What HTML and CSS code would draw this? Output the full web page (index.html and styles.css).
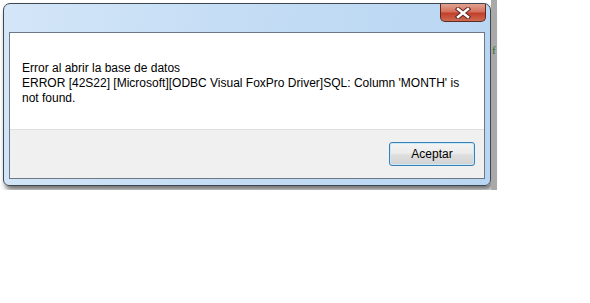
FILE: index.html
```html
<!DOCTYPE html>
<html lang="es">
<head>
    <meta charset="UTF-8">
    <title>Error</title>
    <link rel="stylesheet" href="styles.css">
</head>
<body>
    <div class="desktop">
        <div class="window">
            <div class="titlebar">
                <div class="close-btn">
                    <svg width="16" height="12" viewBox="0 0 16 12">
                        <path d="M3 2 L13 10 M13 2 L3 10" stroke="#5a2a26" stroke-width="4.4" stroke-linecap="square"/>
                        <path d="M3 2 L13 10 M13 2 L3 10" stroke="#ffffff" stroke-width="2.4" stroke-linecap="square"/>
                    </svg>
                </div>
            </div>
            <div class="client">
                <div class="message">
                    Error al abrir la base de datos<br>
                    ERROR [42S22] [Microsoft][ODBC Visual FoxPro Driver]SQL: Column 'MONTH' is not found.
                </div>
                <div class="footer">
                    <button class="ok-btn">Aceptar</button>
                </div>
            </div>
        </div>
        <div class="side-strip"><span class="green-f">f</span></div>
    </div>
</body>
</html>
```

FILE: styles.css
```css
body {
    margin: 0;
    background: #fff;
    font-family: "Liberation Sans", Arial, sans-serif;
}
.desktop {
    display: flex;
    align-items: flex-start;
    padding: 3px 0 0 3px;
}
.window {
    border: 1px solid #3e4750;
    border-radius: 7px 7px 6px 6px;
    background: linear-gradient(100deg, #d4e6f8 0%, #c6def5 40%, #b8d5f2 100%);
    padding: 0 5px 6px 5px;
    box-sizing: border-box;
    width: 488px;
    height: 183px;
    display: flex;
    flex-direction: column;
    box-shadow: 2px 4px 5px rgba(0, 0, 0, 0.55);
}
.titlebar {
    height: 28px;
    display: flex;
    justify-content: flex-end;
    align-items: flex-start;
}
.close-btn {
    width: 46px;
    height: 18px;
    border: 1px solid #5d2a22;
    border-top: none;
    border-radius: 0 0 5px 5px;
    background: linear-gradient(#e3a18f 0%, #d4715c 45%, #c2402b 55%, #cf6a52 100%);
    display: flex;
    align-items: center;
    justify-content: center;
    box-sizing: border-box;
    margin-right: -1px;
}
.client {
    flex: 1;
    border: 1px solid #6c7885;
    background: #fff;
    display: flex;
    flex-direction: column;
}
.message {
    flex: 1;
    padding: 28px 8px 0 12px;
    font-size: 12px;
    line-height: 15px;
    color: #000;
}
.footer {
    height: 49px;
    background: #f0f0f0;
    border-top: 1px solid #dfdfdf;
    box-sizing: border-box;
    display: flex;
    justify-content: flex-end;
    align-items: flex-start;
    padding: 12px 9px 0 0;
}
.ok-btn {
    width: 86px;
    height: 24px;
    border: 1px solid #3c7fb1;
    border-radius: 3px;
    background: linear-gradient(#f4f4f4 0%, #ececec 45%, #dedede 55%, #d2d2d2 100%);
    box-shadow: inset 0 0 0 1px #c6e9fb;
    font-family: "Liberation Sans", Arial, sans-serif;
    font-size: 12px;
    color: #000;
    padding: 0;
}
.side-strip {
    width: 6px;
    height: 190px;
    margin-top: -3px;
    background: #a9a9a9;
    position: relative;
}
.green-f {
    position: absolute;
    left: 1px;
    top: 44px;
    font-size: 11px;
    color: #2d6a2d;
    font-family: "Liberation Serif", serif;
}
```
